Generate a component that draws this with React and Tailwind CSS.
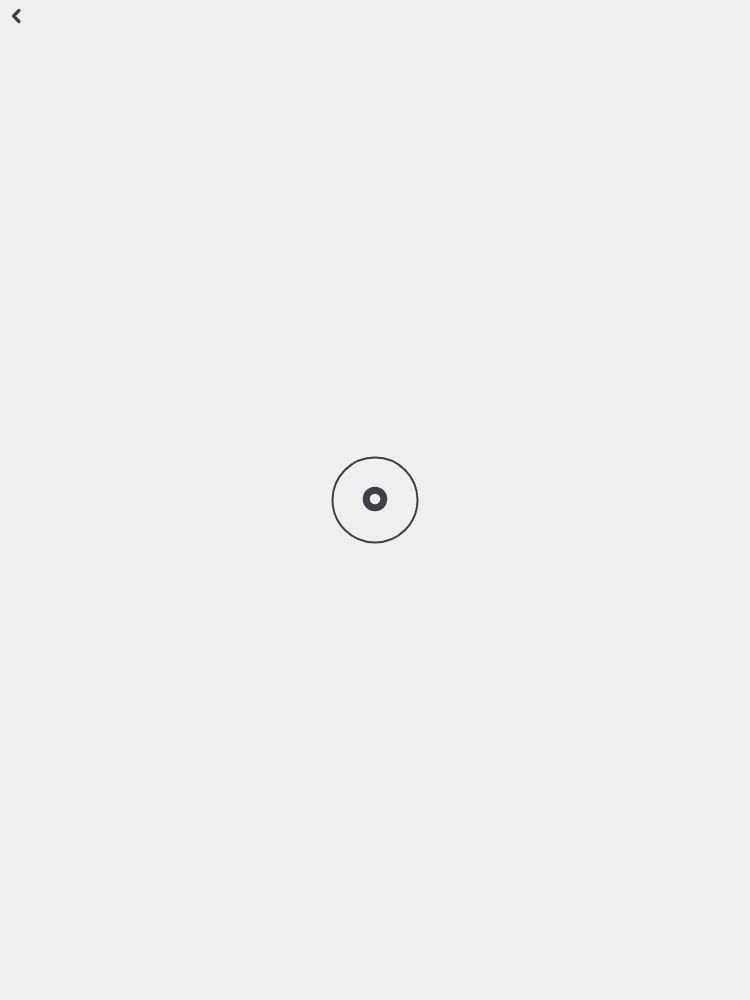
export default function App() {
  return (
    <div className="relative h-[1000px] w-full bg-[#efeef0] flex items-center justify-center">
      <button className="absolute left-[6px] top-[4px] p-0.5 text-[#3f4046]">
        <svg width="16" height="20" viewBox="0 0 16 20" fill="none">
          <path d="M11 4.5 L5.5 10 L11 15.5" stroke="currentColor" strokeWidth="3.2" strokeLinecap="round" strokeLinejoin="round" />
        </svg>
      </button>
      <svg width="90" height="90" viewBox="0 0 90 90" fill="none">
        <circle cx="45" cy="45" r="42.5" stroke="#3f4046" strokeWidth="2" />
        <circle cx="45" cy="44" r="8.8" stroke="#3f4046" strokeWidth="7" />
      </svg>
    </div>
  );
}
